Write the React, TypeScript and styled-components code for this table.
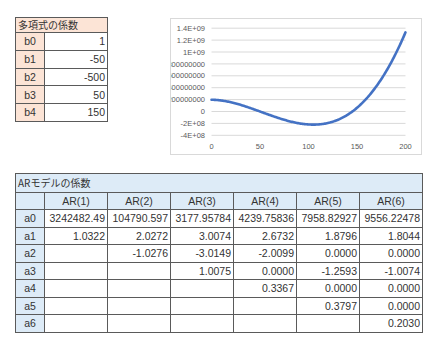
import React from "react";
import styled, { createGlobalStyle } from "styled-components";

const Global = createGlobalStyle`
  html, body { margin: 0; padding: 0; background: #ffffff; }
  body { font-family: "Liberation Sans", "Noto Sans CJK JP", sans-serif; }
`;

const Page = styled.div`
  width: 437px;
  height: 350px;
  box-sizing: border-box;
  padding: 17px 0 0 15px;
  display: flex;
  flex-direction: column;
  gap: 18px;
  overflow: hidden;
`;

const TopRow = styled.div`
  display: flex;
  align-items: flex-start;
`;

const Grid = styled.div<{ $cols: string; $rows: string }>`
  display: grid;
  grid-template-columns: ${(p) => p.$cols};
  grid-template-rows: ${(p) => p.$rows};
  border-top: 1px solid #5a5a5a;
  border-left: 1px solid #5a5a5a;
  width: max-content;
  color: #333333;
`;

const Cell = styled.div<{ $bg?: string; $align?: "left" | "center" | "right"; $span?: number; $cjk?: boolean }>`
  box-sizing: border-box;
  border-right: 1px solid #5a5a5a;
  border-bottom: 1px solid #5a5a5a;
  background: ${(p) => p.$bg || "#ffffff"};
  grid-column: ${(p) => (p.$span ? `span ${p.$span}` : "auto")};
  display: flex;
  align-items: center;
  justify-content: ${(p) =>
    p.$align === "left" ? "flex-start" : p.$align === "center" ? "center" : "flex-end"};
  padding: 0 2px;
  font-family: ${(p) =>
    p.$cjk ? `"Noto Sans CJK JP", sans-serif` : `"Liberation Sans", "Noto Sans CJK JP", sans-serif`};
  font-size: ${(p) => (p.$cjk ? "10px" : "10.5px")};
  white-space: nowrap;
  overflow: hidden;
  line-height: 1;
`;

const ChartBox = styled.div`
  margin-left: 62px;
  margin-top: 1px;
  width: 252px;
  height: 137px;
  box-sizing: border-box;
  border: 1px solid #d9d9d9;
  background: #ffffff;
  overflow: hidden;
`;

const PEACH = "#fce4d6";
const BLUE = "#ddebf7";

const topRows: [string, string][] = [
  ["b0", "1"],
  ["b1", "-50"],
  ["b2", "-500"],
  ["b3", "50"],
  ["b4", "150"],
];

const arData: string[][] = [
  ["3242482.49", "104790.597", "3177.95784", "4239.75836", "7958.82927", "9556.22478"],
  ["1.0322", "2.0272", "3.0074", "2.6732", "1.8796", "1.8044"],
  ["", "-1.0276", "-3.0149", "-2.0099", "0.0000", "0.0000"],
  ["", "", "1.0075", "0.0000", "-1.2593", "-1.0074"],
  ["", "", "", "0.3367", "0.0000", "0.0000"],
  ["", "", "", "", "0.3797", "0.0000"],
  ["", "", "", "", "", "0.2030"],
];

// sample points read from the plotted curve (x, value)
const samples: [number, number][] = [
  [0, 1.97e8],
  [50, 0],
  [100, -2.18e8],
  [150, 0.62e8],
  [200, 1.33e9],
];

function lagrange(x: number) {
  let s = 0;
  for (let i = 0; i < samples.length; i++) {
    let t = samples[i][1];
    for (let j = 0; j < samples.length; j++) {
      if (j !== i) t *= (x - samples[j][0]) / (samples[i][0] - samples[j][0]);
    }
    s += t;
  }
  return s;
}

const X0 = 40.5;
const X1 = 234.5;
const Y_ZERO = 92.5;
const STEP = 11.9;
const yOf = (v: number) => Y_ZERO - (v / 2e8) * STEP;
const xOf = (d: number) => X0 + (d / 200) * (X1 - X0);

const yLabels: [number, string][] = [
  [1.4e9, "1.4E+09"],
  [1.2e9, "1.2E+09"],
  [1e9, "1E+09"],
  [8e8, "800000000"],
  [6e8, "600000000"],
  [4e8, "400000000"],
  [2e8, "200000000"],
  [0, "0"],
  [-2e8, "-2E+08"],
  [-4e8, "-4E+08"],
];

const Chart: React.FC = () => {
  const pts: string[] = [];
  for (let d = 0; d <= 200; d += 1) {
    pts.push(`${xOf(d).toFixed(2)},${yOf(lagrange(d)).toFixed(2)}`);
  }
  return (
    <ChartBox>
      <svg width="250" height="135" viewBox="0 0 250 135">
        {yLabels.map(([v, l]) => (
          <g key={l}>
            <line x1={X0} x2={X1} y1={yOf(v)} y2={yOf(v)} stroke="#d9d9d9" strokeWidth="1" />
            <text
              x={34}
              y={yOf(v) + 2.6}
              textAnchor="end"
              fontSize="7.5"
              fill="#595959"
              fontFamily="Liberation Sans, sans-serif"
            >
              {l}
            </text>
          </g>
        ))}
        {[0, 50, 100, 150, 200].map((d) => (
          <text
            key={d}
            x={xOf(d)}
            y={130}
            textAnchor="middle"
            fontSize="7.5"
            fill="#595959"
            fontFamily="Liberation Sans, sans-serif"
          >
            {d}
          </text>
        ))}
        <polyline
          points={pts.join(" ")}
          fill="none"
          stroke="#4472c4"
          strokeWidth="2.6"
          strokeLinejoin="round"
          strokeLinecap="round"
        />
      </svg>
    </ChartBox>
  );
};

export default function App() {
  return (
    <>
      <Global />
      <Page>
        <TopRow>
          <Grid $cols="29px 63px" $rows="15px repeat(5, 17.8px)">
            <Cell $bg={PEACH} $span={2} $align="left" $cjk>
              多項式の係数
            </Cell>
            {topRows.map(([k, v]) => (
              <React.Fragment key={k}>
                <Cell $bg={PEACH} $align="center">
                  {k}
                </Cell>
                <Cell>{v}</Cell>
              </React.Fragment>
            ))}
          </Grid>
          <Chart />
        </TopRow>
        <Grid $cols="29px repeat(6, 63px)" $rows="18.5px repeat(8, 17.5px)">
          <Cell $bg={BLUE} $span={7} $align="left" $cjk>
            ARモデルの係数
          </Cell>
          <Cell $bg={BLUE} />
          {[1, 2, 3, 4, 5, 6].map((n) => (
            <Cell key={n} $bg={BLUE} $align="center">
              AR({n})
            </Cell>
          ))}
          {arData.map((row, i) => (
            <React.Fragment key={i}>
              <Cell $bg={BLUE} $align="center">
                a{i}
              </Cell>
              {row.map((v, j) => (
                <Cell key={j}>{v}</Cell>
              ))}
            </React.Fragment>
          ))}
        </Grid>
      </Page>
    </>
  );
}
